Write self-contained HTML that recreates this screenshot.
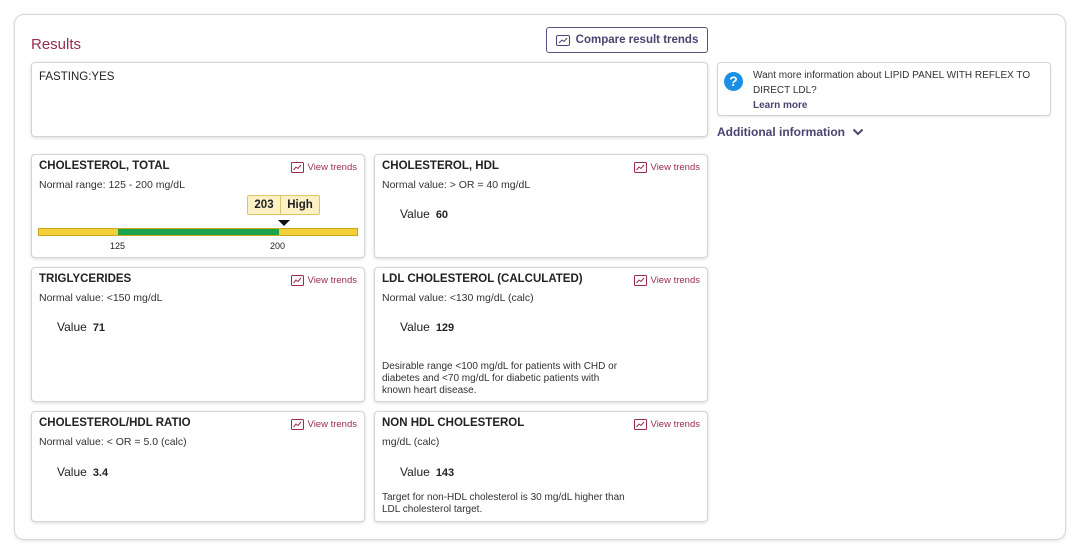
<!DOCTYPE html>
<html><head><style>
*{box-sizing:border-box;margin:0;padding:0}
body{width:1084px;height:556px;background:#fff;font-family:"Liberation Sans",sans-serif;color:#222;position:relative;overflow:hidden}
.abs{position:absolute}
.outer{left:14px;top:14px;width:1052px;height:526px;border:1px solid #d6d6d6;border-radius:10px;box-shadow:0 1px 3px rgba(0,0,0,.12)}
.card{position:absolute;border:1px solid #d4d4d4;border-radius:4px;box-shadow:0 1px 3px rgba(0,0,0,.15);background:#fff}
.t{position:absolute;left:7px;top:5px;font-size:11.5px;font-weight:bold;color:#222}
.n{position:absolute;left:7px;top:24px;font-size:10.5px;color:#333}
.vt{position:absolute;right:7px;top:7px;font-size:9.5px;color:#9a2b4d;display:flex;align-items:center;gap:4px}
.val{position:absolute;left:25px;font-size:12px;color:#222}
.val b{margin-left:6px;font-size:11px}
.note{position:absolute;left:7px;font-size:10px;line-height:12px;color:#333;width:258px}
</style></head><body>
<div class="abs outer"></div>
<div class="abs" style="left:31px;top:36px;font-size:15px;color:#9a2b4d">Results</div>
<div class="abs" style="left:546px;top:27px;width:162px;height:26px;border:1px solid #5c5487;border-radius:3px;font-size:11.5px;font-weight:bold;color:#4a4470;display:flex;align-items:center;justify-content:center;gap:6px">
<svg width="14" height="11" viewBox="0 0 14 11"><rect x="0.5" y="0.5" width="13" height="10" rx="1.5" fill="none" stroke="#4a4470"/><path d="M3 8 L6 5 L8 6.5 L11 3" fill="none" stroke="#4a4470"/></svg>Compare result trends</div>
<div class="card" style="left:31px;top:62px;width:677px;height:75px"><div style="position:absolute;left:7px;top:8px;font-size:11.5px">FASTING:YES</div></div>
<div class="card" style="left:717px;top:62px;width:334px;height:54px;box-shadow:0 1px 2px rgba(0,0,0,.1)">
<div style="position:absolute;left:6px;top:9px;width:19px;height:19px;border-radius:50%;background:#1a8fe3;color:#fff;font-weight:bold;font-size:14px;text-align:center;line-height:19px">?</div>
<div style="position:absolute;left:35px;top:5px;font-size:10px;line-height:15px;color:#333">Want more information about LIPID PANEL WITH REFLEX TO<br>DIRECT LDL?<br><span style="color:#4a4470;font-weight:bold">Learn more</span></div></div>
<div class="abs" style="left:717px;top:125px;font-size:12px;font-weight:bold;color:#4a4470">Additional information <svg width="12" height="8" viewBox="0 0 12 8" style="margin-left:4px"><path d="M1.5 1.5 L6 6 L10.5 1.5" fill="none" stroke="#4a4470" stroke-width="2"/></svg></div>

<div class="card" style="left:31px;top:154px;width:334px;height:104px">
<div class="t">CHOLESTEROL, TOTAL</div><div class="n">Normal range: 125 - 200 mg/dL</div>
<div class="vt"><svg width="13" height="11"><rect x="0.5" y="0.5" width="12" height="10" rx="1" fill="none" stroke="#9a2b4d"/><path d="M2.5 8 L5 5 L7 6.5 L10 3" fill="none" stroke="#9a2b4d"/></svg>View trends</div>
<div style="position:absolute;left:215px;top:40px;width:73px;height:20px;background:#fbf1c4;border:1px solid #d8c56a;border-radius:2px;font-size:11.5px;font-weight:bold;display:flex"><div style="width:33px;text-align:center;line-height:18px;border-right:1px solid #d8c56a">203</div><div style="flex:1;text-align:center;line-height:18px">High</div></div>
<div style="position:absolute;left:246px;top:65px;width:0;height:0;border-left:6px solid transparent;border-right:6px solid transparent;border-top:6px solid #111"></div>
<div style="position:absolute;left:6px;top:73px;width:320px;height:8px;border:1px solid #c9a720;background:linear-gradient(to right,#f2d03b 0 79px,#1aa34a 79px 240px,#f2d03b 240px)"></div>
<div style="position:absolute;left:78px;top:86px;font-size:9px">125</div>
<div style="position:absolute;left:238px;top:86px;font-size:9px">200</div>
</div>
<div class="card" style="left:374px;top:154px;width:334px;height:104px">
<div class="t">CHOLESTEROL, HDL</div><div class="n">Normal value: &gt; OR = 40 mg/dL</div>
<div class="vt"><svg width="13" height="11"><rect x="0.5" y="0.5" width="12" height="10" rx="1" fill="none" stroke="#9a2b4d"/><path d="M2.5 8 L5 5 L7 6.5 L10 3" fill="none" stroke="#9a2b4d"/></svg>View trends</div>
<div class="val" style="top:52px">Value<b>60</b></div></div>
<div class="card" style="left:31px;top:267px;width:334px;height:135px">
<div class="t">TRIGLYCERIDES</div><div class="n">Normal value: &lt;150 mg/dL</div>
<div class="vt"><svg width="13" height="11"><rect x="0.5" y="0.5" width="12" height="10" rx="1" fill="none" stroke="#9a2b4d"/><path d="M2.5 8 L5 5 L7 6.5 L10 3" fill="none" stroke="#9a2b4d"/></svg>View trends</div>
<div class="val" style="top:52px">Value<b>71</b></div></div>
<div class="card" style="left:374px;top:267px;width:334px;height:135px">
<div class="t">LDL CHOLESTEROL (CALCULATED)</div><div class="n">Normal value: &lt;130 mg/dL (calc)</div>
<div class="vt"><svg width="13" height="11"><rect x="0.5" y="0.5" width="12" height="10" rx="1" fill="none" stroke="#9a2b4d"/><path d="M2.5 8 L5 5 L7 6.5 L10 3" fill="none" stroke="#9a2b4d"/></svg>View trends</div>
<div class="val" style="top:52px">Value<b>129</b></div>
<div class="note" style="top:93px">Desirable range &lt;100 mg/dL for patients with CHD or<br>diabetes and &lt;70 mg/dL for diabetic patients with<br>known heart disease.</div></div>
<div class="card" style="left:31px;top:411px;width:334px;height:111px">
<div class="t">CHOLESTEROL/HDL RATIO</div><div class="n">Normal value: &lt; OR = 5.0 (calc)</div>
<div class="vt"><svg width="13" height="11"><rect x="0.5" y="0.5" width="12" height="10" rx="1" fill="none" stroke="#9a2b4d"/><path d="M2.5 8 L5 5 L7 6.5 L10 3" fill="none" stroke="#9a2b4d"/></svg>View trends</div>
<div class="val" style="top:53px">Value<b>3.4</b></div></div>
<div class="card" style="left:374px;top:411px;width:334px;height:111px">
<div class="t">NON HDL CHOLESTEROL</div><div class="n">mg/dL (calc)</div>
<div class="vt"><svg width="13" height="11"><rect x="0.5" y="0.5" width="12" height="10" rx="1" fill="none" stroke="#9a2b4d"/><path d="M2.5 8 L5 5 L7 6.5 L10 3" fill="none" stroke="#9a2b4d"/></svg>View trends</div>
<div class="val" style="top:53px">Value<b>143</b></div>
<div class="note" style="top:80px">Target for non-HDL cholesterol is 30 mg/dL higher than<br>LDL cholesterol target.</div></div>
</body></html>
